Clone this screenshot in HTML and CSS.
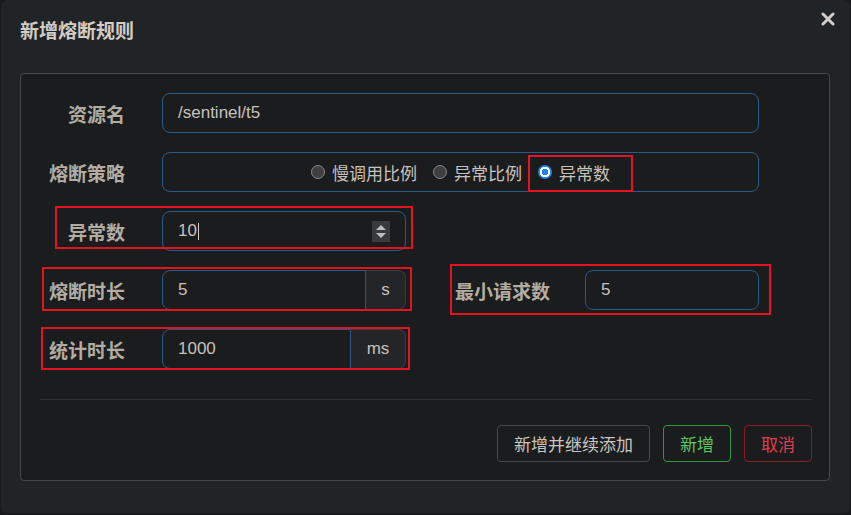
FILE: index.html
```html
<!DOCTYPE html>
<html lang="zh-CN">
<head>
<meta charset="UTF-8">
<meta name="viewport" content="width=device-width, initial-scale=1.0">
<title>新增熔断规则</title>
<link rel="stylesheet" href="styles.css">
</head>
<body>

<div class="modal">
    <div class="modal-header">
        <h4 class="modal-title">新增熔断规则</h4>
        <span class="close">
            <svg width="14" height="14" viewBox="0 0 14 14"><path d="M2 2L12 12M12 2L2 12" stroke="#d2cdc6" stroke-width="3" stroke-linecap="round"/></svg>
        </span>
    </div>

    <div class="panel">
        <div class="form-row">
            <label class="form-label">资源名</label>
            <div class="field"><span>/sentinel/t5</span></div>
        </div>

        <div class="form-row">
            <label class="form-label">熔断策略</label>
            <div class="field radio-group">
                <span class="radio"><i class="dot"></i>慢调用比例</span>
                <span class="radio"><i class="dot"></i>异常比例</span>
                <span class="radio"><i class="dot checked"></i>异常数</span>
            </div>
        </div>

        <div class="form-row short">
            <label class="form-label">异常数</label>
            <div class="field number"><span>10</span><i class="caret"></i>
                <span class="spinner"><i class="up"></i><i class="down"></i></span>
            </div>
        </div>

        <div class="form-row split">
            <div class="half">
                <label class="form-label">熔断时长</label>
                <div class="input-group">
                    <div class="field"><span>5</span></div>
                    <span class="addon addon-s">s</span>
                </div>
            </div>
            <div class="half right">
                <label class="form-label">最小请求数</label>
                <div class="field"><span>5</span></div>
            </div>
        </div>

        <div class="form-row short">
            <label class="form-label">统计时长</label>
            <div class="input-group">
                <div class="field"><span>1000</span></div>
                <span class="addon addon-ms">ms</span>
            </div>
        </div>

        <hr class="divider">

        <div class="footer">
            <button class="btn">新增并继续添加</button>
            <button class="btn btn-add">新增</button>
            <button class="btn btn-cancel">取消</button>
        </div>
    </div>

    <!-- annotation boxes -->
    <div class="mark mark-radio"></div>
    <div class="mark mark-count"></div>
    <div class="mark mark-time"></div>
    <div class="mark mark-min"></div>
    <div class="mark mark-stat"></div>
</div>

</body>
</html>
```

FILE: styles.css
```css
body {
    margin: 0;
    padding: 0;
    background-color: #18191b;
    font-family: "Liberation Sans", "Noto Sans CJK SC", sans-serif;
    color: #c6c2bc;
}

.modal {
    position: relative;
    width: 849px;
    height: 513px;
    margin-left: 1px;
    box-sizing: border-box;
    background-color: #212427;
    border-radius: 6px;
}

.modal-header {
    display: flex;
    justify-content: space-between;
    align-items: flex-start;
    height: 73px;
}

.modal-title {
    margin: 20px 0 0 19px;
    font-size: 19px;
    line-height: 24px;
    font-weight: bold;
    color: #d3cdc5;
}

.close {
    display: block;
    margin: 12px 15px 0 0;
    width: 14px;
    height: 14px;
}

.close svg {
    display: block;
}

.panel {
    margin: 0 20px 0 19px;
    padding: 19px 17px 18px 19px;
    background-color: #1b1c1e;
    border: 1px solid #44484c;
    border-radius: 4px;
}

.form-row {
    display: grid;
    grid-template-columns: 85px 597px;
    column-gap: 37px;
    align-items: center;
    margin-bottom: 19px;
}

.form-row.short {
    grid-template-columns: 85px 244px;
}

.form-row.split {
    display: flex;
    column-gap: 0;
}

.half {
    display: grid;
    grid-template-columns: 85px 244px;
    column-gap: 37px;
    align-items: center;
}

.half.right {
    grid-template-columns: 95px 174px;
    column-gap: 35px;
    margin-left: 49px;
}

.form-label {
    text-align: right;
    font-size: 19px;
    font-weight: bold;
    color: #b3aca2;
    white-space: nowrap;
}

.field {
    position: relative;
    display: flex;
    align-items: center;
    height: 40px;
    box-sizing: border-box;
    padding-left: 15px;
    border: 1px solid #275b8b;
    border-radius: 8px;
    font-size: 17px;
    color: #c6c2bc;
}

.radio-group {
    justify-content: center;
    gap: 16px;
    padding-left: 0;
}

.radio {
    display: flex;
    align-items: center;
    gap: 7px;
    font-size: 17px;
}

.dot {
    width: 12px;
    height: 12px;
    border-radius: 50%;
    background-color: #3f3f3f;
    border: 1px solid #8a8a8a;
}

.dot.checked {
    width: 14px;
    height: 14px;
    border: none;
    background: radial-gradient(circle, #1f84e4 0 3px, #ffffff 3.5px 5px, #1f84e4 5.5px);
}

.caret {
    width: 1px;
    height: 17px;
    margin-left: 1px;
    background-color: #d0d0d0;
}

.spinner {
    position: absolute;
    right: 15px;
    top: 9px;
    width: 18px;
    height: 21px;
    background-color: #3a3b3c;
    display: flex;
    flex-direction: column;
    align-items: center;
    justify-content: center;
    gap: 3px;
}

.spinner .up {
    border-left: 5px solid transparent;
    border-right: 5px solid transparent;
    border-bottom: 5px solid #bdbdbd;
}

.spinner .down {
    border-left: 5px solid transparent;
    border-right: 5px solid transparent;
    border-top: 5px solid #bdbdbd;
}

.input-group {
    display: flex;
    height: 40px;
}

.input-group .field {
    flex: 1;
    border-radius: 8px 0 0 8px;
}

.addon {
    display: flex;
    align-items: center;
    justify-content: center;
    box-sizing: border-box;
    background-color: #232528;
    border: 1px solid #393c40;
    border-left: none;
    border-radius: 0 8px 8px 0;
    font-size: 17px;
    color: #c6c2bc;
}

.addon-s {
    width: 40px;
}

.addon-ms {
    width: 55px;
}

.divider {
    margin: 30px 0 0 0;
    border: none;
    height: 1px;
    background-color: #2f3235;
}

.footer {
    display: flex;
    justify-content: flex-end;
    gap: 13px;
    margin-top: 25px;
}

.btn {
    height: 37px;
    padding: 0 16px;
    background-color: transparent;
    border: 1px solid #45484c;
    border-radius: 4px;
    font-family: "Liberation Sans", "Noto Sans CJK SC", sans-serif;
    font-size: 17px;
    color: #c9c5bf;
    cursor: pointer;
}

.btn-add {
    border-color: #2a9a3e;
    color: #5cc65e;
}

.btn-cancel {
    border-color: #8a1c28;
    color: #e2404e;
}

/* red annotation boxes */
.mark {
    position: absolute;
    box-sizing: border-box;
    border: 2px solid #e3141f;
}

.mark-radio {
    left: 527px;
    top: 155px;
    width: 105px;
    height: 37px;
}

.mark-count {
    left: 54px;
    top: 206px;
    width: 358px;
    height: 43px;
}

.mark-time {
    left: 41px;
    top: 267px;
    width: 370px;
    height: 44px;
}

.mark-min {
    left: 449px;
    top: 264px;
    width: 321px;
    height: 51px;
}

.mark-stat {
    left: 40px;
    top: 327px;
    width: 369px;
    height: 43px;
}
```
